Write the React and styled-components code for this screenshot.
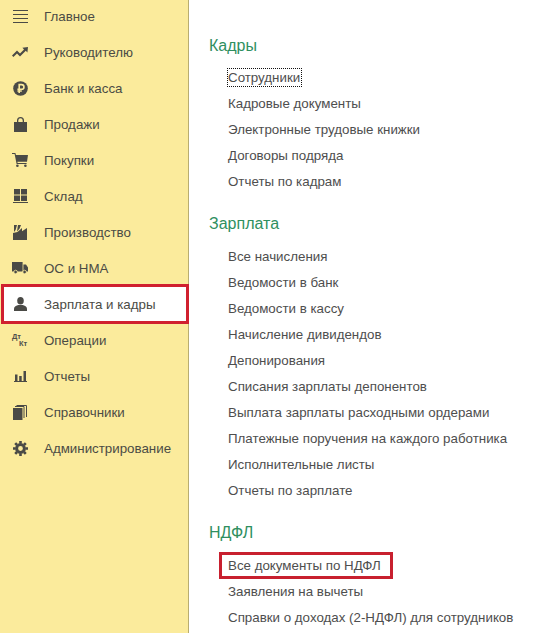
import React from "react";
import styled, { createGlobalStyle } from "styled-components";

const Global = createGlobalStyle`
  html, body { margin: 0; padding: 0; background: #fff; }
  body { font-family: "Liberation Sans", Arial, sans-serif; overflow: hidden; }
`;

const Page = styled.div`
  display: flex;
  width: 559px;
  height: 633px;
  overflow: hidden;
  background: #fff;
`;

const Sidebar = styled.nav`
  width: 189px;
  height: 633px;
  flex: none;
  background: #fbeb9c;
  border-right: 1px solid #b9ad70;
  box-sizing: border-box;
  display: flex;
  flex-direction: column;
`;

const NavList = styled.div`
  margin-top: -2px;
  display: flex;
  flex-direction: column;
`;

const NavRow = styled.div`
  height: ${p => (p.$boxed ? "40px" : "36px")};
  margin: ${p => (p.$boxed ? "-2px -1px -2px 1px" : "0")};
  display: flex;
  align-items: center;
  box-sizing: border-box;
  background: ${p => (p.$boxed ? "#fff" : "transparent")};
  border: ${p => (p.$boxed ? "3px solid #d0202f" : "0")};
  padding-left: ${p => (p.$boxed ? "9px" : "13px")};
  font-size: 13.33px;
  color: #4b4b45;
`;

const IconSlot = styled.span`
  width: 14px;
  height: 16px;
  flex: none;
  margin-right: 17px;
  display: flex;
  align-items: center;
  justify-content: center;
  color: #4a4a46;
  svg { display: block; overflow: visible; flex: none; }
`;

const DtKt = styled.span`
  position: relative;
  display: block;
  width: 15px;
  height: 15px;
  font-size: 7.5px;
  font-weight: 700;
  line-height: 7px;
  color: #4f4f4b;
  span { position: absolute; }
  span:first-child { left: -1px; top: 0; }
  span:last-child { left: 6px; top: 7px; }
`;

const Content = styled.main`
  flex: 1;
  padding: 36px 0 0 20px;
  min-width: 0;
`;

const Section = styled.section`
  margin-bottom: 19px;
`;

const Heading = styled.h2`
  margin: 0 0 ${p => (p.$tight ? "10px" : "11px")};
  height: 19px;
  line-height: 19px;
  font-size: 16px;
  font-weight: 400;
  color: #2f8f5f;
`;

const List = styled.ul`
  list-style: none;
  margin: 0;
  padding: 0 0 0 19px;
`;

const Item = styled.li`
  height: 26px;
  line-height: 26px;
  font-size: 13.33px;
  color: #4e4e4e;
  white-space: nowrap;
  position: relative;
`;

const Focus = styled.span`
  display: inline-block;
  line-height: 17px;
  outline: 1px dotted #111;
  outline-offset: 0;
  padding: 0 1px 0 0;
`;

const Marked = styled.span`
  display: inline-block;
  line-height: 21px;
  border: 3px solid #c8202f;
  margin-left: -9px;
  padding: 0 9px 0 6px;
  position: relative;
  top: -1px;
`;

const Bars = () => (
  <svg width="15" height="13" viewBox="0 0 15 13" fill="none" stroke="currentColor" strokeWidth="1">
    <path d="M0 .5h15M0 4.5h15M0 8.500h15M0 12.500h15" />
  </svg>
);
const Trend = () => (
  <svg width="16" height="10" viewBox="0 0 16 10" fill="currentColor">
    <path d="M0 8.600 5 3.600 8 6.400 12 2.400 10.400.8 16 0 15.400 5.400 13.800 3.800 8 9.400 5 6.600 1.400 10z" />
  </svg>
);
const Ruble = () => (
  <svg width="15" height="15" viewBox="0 0 15 15">
    <circle cx="7.500" cy="7.500" r="7.300" fill="currentColor" />
    <path d="M6.200 12V3.600h2.400a2.300 2.300 0 0 1 0 4.700H4.400M4.400 10h4.400" fill="none" stroke="#fbeb9c" strokeWidth="1.600" />
  </svg>
);
const Bag = () => (
  <svg width="13" height="15" viewBox="0 0 13 15" fill="currentColor">
    <path d="M0 5h3V3.500a3.500 3.500 0 0 1 7 0V5h3v10H0zM4.300 5h4.400V3.500a2.200 2.200 0 0 0-4.400 0z" fillRule="evenodd" />
  </svg>
);
const Cart = () => (
  <svg width="16" height="14" viewBox="0 0 16 14" fill="currentColor">
    <path d="M0 0h3.400l.5 2H16l-1 6.800H5.400l.2 1.200H14.600v1H4.600L2.600 1H0z" />
    <circle cx="5.400" cy="12.800" r="1.300" /><circle cx="13.400" cy="12.800" r="1.300" />
  </svg>
);
const Store = () => (
  <svg width="15" height="14" viewBox="0 0 15 14" fill="currentColor">
    <path d="M1 0h6v5.500H1zM8 0h6v5.500H8zM1 6.500h6V12H1zM8 6.500h6V12H8zM0 13h15v1H0z" />
  </svg>
);
const Factory = () => (
  <svg width="14" height="15" viewBox="0 0 14 15" fill="currentColor">
    <path d="M1 0h3L2.600 5 1 7zM5 0h3L6.500 3.800 4 6.500z" />
    <path d="M0 8 4.500 7 9 3v3.200L14 3v12H0z" />
  </svg>
);
const Truck = () => (
  <svg width="16" height="12" viewBox="0 0 16 12" fill="currentColor">
    <path d="M0 0h10.600v9.600H0zM11.400 2.600H14l2 2.800v4.200h-4.600z" />
    <circle cx="3.600" cy="10" r="1.800" stroke="#fbeb9c" strokeWidth=".8" />
    <circle cx="12.600" cy="10" r="1.800" stroke="#fbeb9c" strokeWidth=".8" />
  </svg>
);
const Person = () => (
  <svg width="13" height="14" viewBox="0 0 13 14" fill="currentColor">
    <ellipse cx="6.500" cy="3.800" rx="3.300" ry="3.800" />
    <path d="M0 14v-2.400C0 9.600 2.400 8.600 4.400 8h4.200c2 .6 4.400 1.600 4.400 3.600V14z" />
  </svg>
);
const Chart = () => (
  <svg width="13" height="11" viewBox="0 0 13 11" fill="currentColor">
    <path d="M1 3.500h2.500V10H1zM5.200 5h2.500v5H5.200zM9.500 0H12v10H9.500zM0 10h13v1H0z" />
  </svg>
);
const Books = () => (
  <svg width="14" height="15" viewBox="0 0 14 15" fill="currentColor">
    <path d="M0 3h9.500v12H0z" />
    <path d="M2 1.500h9v11.500M3.500 .5h10V12" fill="none" stroke="currentColor" strokeWidth="1" />
  </svg>
);
const Gear = () => (
  <svg width="15" height="15" viewBox="0 0 15 15">
    <circle cx="7.500" cy="7.500" r="3.900" fill="none" stroke="currentColor" strokeWidth="3" />
    <path d="M7.500 0v15M0 7.500h15M2.200 2.200l10.600 10.600M12.800 2.200 2.200 12.800" stroke="currentColor" strokeWidth="2.600" strokeDasharray="2.600 9.800" fill="none" />
  </svg>
);

const nav = [
  ["Главное", <Bars />],
  ["Руководителю", <Trend />],
  ["Банк и касса", <Ruble />],
  ["Продажи", <Bag />],
  ["Покупки", <Cart />],
  ["Склад", <Store />],
  ["Производство", <Factory />],
  ["ОС и НМА", <Truck />],
  ["Зарплата и кадры", <Person />, true],
  ["Операции", <DtKt><span>Дт</span><span>Кт</span></DtKt>],
  ["Отчеты", <Chart />],
  ["Справочники", <Books />],
  ["Администрирование", <Gear />],
];

const sections = [
  ["Кадры", ["Сотрудники", "Кадровые документы", "Электронные трудовые книжки", "Договоры подряда", "Отчеты по кадрам"], true],
  ["Зарплата", ["Все начисления", "Ведомости в банк", "Ведомости в кассу", "Начисление дивидендов", "Депонирования", "Списания зарплаты депонентов", "Выплата зарплаты расходными ордерами", "Платежные поручения на каждого работника", "Исполнительные листы", "Отчеты по зарплате"]],
  ["НДФЛ", ["Все документы по НДФЛ", "Заявления на вычеты", "Справки о доходах (2-НДФЛ) для сотрудников"]],
];

export default function App() {
  return (
    <Page>
      <Global />
      <Sidebar>
        <NavList>
          {nav.map(([label, icon, boxed]) => (
            <NavRow key={label} $boxed={boxed}>
              <IconSlot>{icon}</IconSlot>
              {label}
            </NavRow>
          ))}
        </NavList>
      </Sidebar>
      <Content>
        {sections.map(([title, items, tight]) => (
          <Section key={title}>
            <Heading $tight={tight}>{title}</Heading>
            <List>
              {items.map(t => (
                <Item key={t}>
                  {t === "Сотрудники" ? <Focus>{t}</Focus> : t === "Все документы по НДФЛ" ? <Marked>{t}</Marked> : t}
                </Item>
              ))}
            </List>
          </Section>
        ))}
      </Content>
    </Page>
  );
}
